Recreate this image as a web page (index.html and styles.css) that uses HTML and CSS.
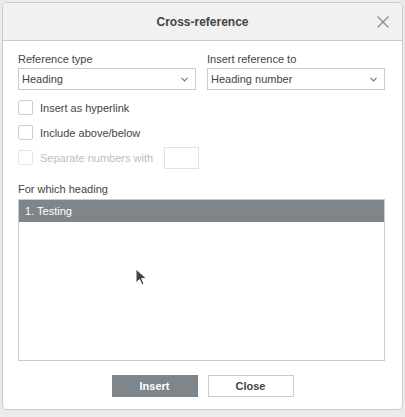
FILE: index.html
```html
<!DOCTYPE html>
<html lang="en">
<head>
    <meta charset="UTF-8">
    <title>Cross-reference</title>
    <link rel="stylesheet" href="styles.css">
</head>
<body>
<div class="dialog">
    <div class="dialog__header">
        <span class="dialog__title">Cross-reference</span>
        <svg class="dialog__close" width="12" height="12" viewBox="0 0 12 12">
            <path d="M0.5 0.5 L11.5 11.5 M11.5 0.5 L0.5 11.5" stroke="#8a8a8a" stroke-width="1.2" fill="none"/>
        </svg>
    </div>
    <div class="dialog__body">
        <div class="row">
            <div class="field">
                <div class="field__label">Reference type</div>
                <div class="select">
                    <span>Heading</span>
                    <svg width="7" height="5" viewBox="0 0 7 5"><path d="M0.5 0.8 L3.5 3.8 L6.5 0.8" stroke="#777" stroke-width="1.2" fill="none"/></svg>
                </div>
            </div>
            <div class="field">
                <div class="field__label">Insert reference to</div>
                <div class="select">
                    <span>Heading number</span>
                    <svg width="7" height="5" viewBox="0 0 7 5"><path d="M0.5 0.8 L3.5 3.8 L6.5 0.8" stroke="#777" stroke-width="1.2" fill="none"/></svg>
                </div>
            </div>
        </div>
        <label class="check">
            <span class="check__box"></span>
            Insert as hyperlink
        </label>
        <label class="check">
            <span class="check__box"></span>
            Include above/below
        </label>
        <label class="check check_disabled">
            <span class="check__box"></span>
            Separate numbers with
            <span class="check__input"></span>
        </label>
        <div class="field__label field__label_list">For which heading</div>
        <div class="list">
            <div class="list__item list__item_selected">1. Testing</div>
        </div>
    </div>
    <div class="dialog__footer">
        <button class="btn btn_primary">Insert</button>
        <button class="btn">Close</button>
    </div>
    <svg class="cursor" width="14" height="20" viewBox="0 0 14 20">
        <path d="M1 1 L1 15 L4.5 11.5 L7 17 L9 16 L6.7 10.6 L11.5 10.6 Z" fill="#444" stroke="#fff" stroke-width="1"/>
    </svg>
</div>
</body>
</html>
```

FILE: styles.css
```css
body {
    margin: 0;
    background: #ebebeb;
    font-family: "Liberation Sans", Arial, sans-serif;
    font-size: 11px;
    color: #444;
}
.dialog {
    position: relative;
    box-sizing: border-box;
    width: 401px;
    height: 408px;
    margin: 2px 0 0 2px;
    background: #fff;
    border: 1px solid #cbcbcb;
    border-radius: 5px;
    overflow: hidden;
}
.dialog__header {
    position: relative;
    height: 37px;
    background: #f1f1f1;
    border-bottom: 1px solid #cbcbcb;
    display: flex;
    align-items: center;
    justify-content: center;
}
.dialog__title {
    font-weight: bold;
    font-size: 12px;
    color: #444;
}
.dialog__close {
    position: absolute;
    right: 13px;
    top: 13px;
}
.dialog__body {
    padding: 11px 16px 0 15px;
}
.row {
    display: flex;
    gap: 11px;
}
.field {
    width: 178px;
}
.field__label {
    height: 14px;
    line-height: 14px;
    margin-bottom: 2px;
}
.select {
    box-sizing: border-box;
    height: 22px;
    border: 1px solid #cbcbcb;
    display: flex;
    align-items: center;
    justify-content: space-between;
    padding: 0 7px 0 3px;
    color: #444;
}
.check {
    display: flex;
    align-items: center;
    height: 15px;
    margin-top: 10px;
}
.check__box {
    box-sizing: border-box;
    width: 15px;
    height: 15px;
    border: 1px solid #cbcbcb;
    border-radius: 2px;
    margin-right: 7px;
}
.check_disabled {
    color: #bdbdbd;
}
.check_disabled .check__box {
    border-color: #e6e6e6;
}
.check__input {
    box-sizing: border-box;
    width: 35px;
    height: 22px;
    border: 1px solid #e1e1e1;
    margin-left: 11px;
}
.field__label_list {
    margin-top: 17px;
    margin-bottom: 3px;
}
.list {
    box-sizing: border-box;
    width: 367px;
    height: 162px;
    border: 1px solid #cbcbcb;
}
.list__item {
    height: 22px;
    line-height: 22px;
    padding-left: 6px;
}
.list__item_selected {
    background: #7e858b;
    color: #fff;
}
.dialog__footer {
    display: flex;
    justify-content: center;
    gap: 10px;
    padding-top: 14px;
}
.btn {
    box-sizing: border-box;
    width: 86px;
    height: 22px;
    border: 1px solid #cbcbcb;
    background: #fff;
    font-family: inherit;
    font-size: 11px;
    font-weight: bold;
    color: #444;
    padding: 0;
}
.btn_primary {
    background: #7e858b;
    border-color: #7e858b;
    color: #fff;
}
.cursor {
    position: absolute;
    left: 132px;
    top: 265px;
}
```
